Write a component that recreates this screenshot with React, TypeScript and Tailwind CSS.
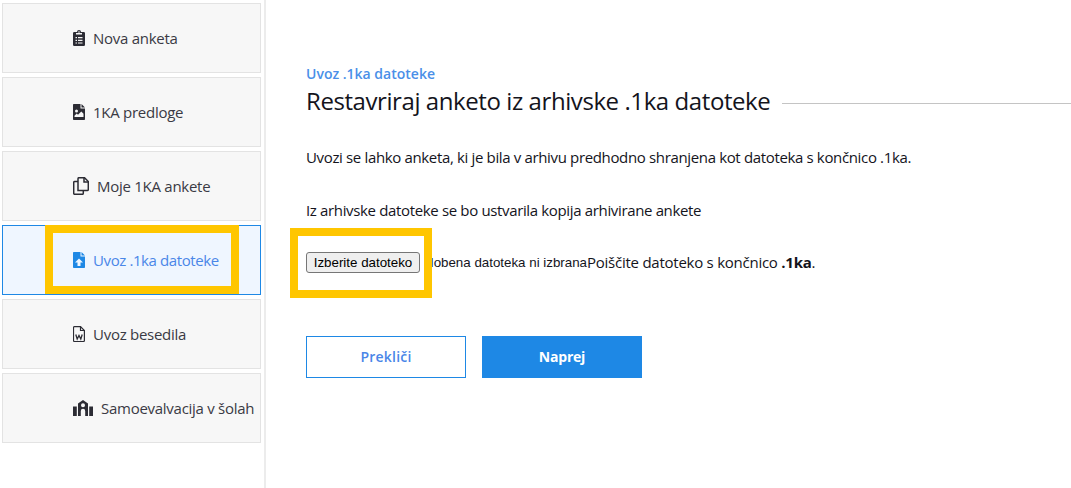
import { ReactNode } from "react";

const font = { fontFamily: '"Open Sans", sans-serif' };
const native = { fontFamily: '"Liberation Sans", sans-serif' };

function ClipboardIcon() {
  return (
    <svg viewBox="0 0 12 16" className="h-4 w-3" fill="#2c2c34">
      <path fillRule="evenodd" d="M1.200 2H4a2 2 0 0 1 4 0h2.800A1.200 1.200 0 0 1 12 3.200v11.600a1.200 1.200 0 0 1-1.200 1.200H1.200A1.200 1.200 0 0 1 0 14.800V3.200A1.200 1.200 0 0 1 1.200 2ZM5.200 2a.8.8 0 1 0 1.600 0 .8.8 0 0 0-1.600 0ZM3 3v1.500h6V3H3Zm-.5 4v1.200H4V7H2.500Zm2.500 0v1.200h4.500V7H5Zm-2.500 2.700v1.200H4V9.700H2.500Zm2.500 0v1.200h4.500V9.700H5Zm-2.500 2.700v1.200H4v-1.200H2.500Zm2.500 0v1.200h4.500v-1.200H5Z" />
    </svg>
  );
}

function ImageFileIcon() {
  return (
    <svg viewBox="0 0 12 16" className="h-4 w-3" fill="#2c2c34">
      <path fillRule="evenodd" d="M.8 0h6.700v4.500H12v10.700a.8.8 0 0 1-.8.8H.8a.8.8 0 0 1-.8-.8V.8A.8.8 0 0 1 .8 0Zm7.700 0L12 3.500H8.500V0ZM3.500 5.500a1.500 1.500 0 1 0 0 3 1.500 1.500 0 0 0 0-3ZM1.500 13h9V9.800L8.300 7.500 5 10.800 3.700 9.500 1.500 11.700V13Z" />
    </svg>
  );
}

function CopyIcon() {
  return (
    <svg viewBox="0 0 16 18" className="h-[18px] w-4" fill="none" stroke="#2c2c34" strokeWidth="1.500">
      <path d="M5 13.500V1.700c0-.5.4-1 1-1h5.500l3.800 3.800V12.500c0 .5-.4 1-1 1H5Z" />
      <path d="M11 1v4h4" />
      <path d="M5 4.500H1.700c-.6 0-1 .4-1 1v10.800c0 .6.4 1 1 1h7.600c.6 0 1-.4 1-1v-2.800" />
    </svg>
  );
}

function UploadFileIcon() {
  return (
    <svg viewBox="0 0 12 16" className="h-4 w-3" fill="#1e88e5">
      <path fillRule="evenodd" d="M.8 0h6.700v4.500H12v10.700a.8.8 0 0 1-.8.8H.8a.8.8 0 0 1-.8-.8V.8A.8.8 0 0 1 .8 0Zm7.700 0L12 3.500H8.500V0ZM6 6.500 2 10.500h2.500V14h3v-3.500H10L6 6.500Z" />
    </svg>
  );
}

function WordFileIcon() {
  return (
    <svg viewBox="0 0 12 16" className="h-4 w-3" fill="none" stroke="#2c2c34" strokeWidth="1.200">
      <path d="M1.500.6h6l3.900 3.900v10a1 1 0 0 1-1 1h-8.900a1 1 0 0 1-1-1v-13a1 1 0 0 1 1-.9Z" />
      <path d="M7.500.6v3.900h3.900" />
      <path d="M2.800 8.500l1.400 4.500L6 9.500 7.800 13l1.400-4.500" strokeWidth="1.300" />
    </svg>
  );
}

function SchoolIcon() {
  return (
    <svg viewBox="0 0 20 16" className="h-4 w-5" fill="#2c2c34">
      <path fillRule="evenodd" d="M10 0l5 3.500V16h-2.800v-5a2.200 2.200 0 0 0-4.400 0v5H5V3.500L10 0Zm0 3.200a2 2 0 1 0 0 4 2 2 0 0 0 0-4Z" />
      <rect x="0" y="6.500" width="3.800" height="9.500" />
      <rect x="16.200" y="6.500" width="3.800" height="9.500" />
    </svg>
  );
}

function NavCard({ icon, label, active }: { icon: ReactNode; label: string; active?: boolean }) {
  return (
    <div className={`flex h-[70px] w-[259px] items-center border pl-[70px] ${active ? "border-[#1e88e5] bg-[#eff6ff] text-[#4a86e8]" : "border-[#e3e3e3] bg-[#f7f7f7] text-[#3a3a44]"}`}>
      <div className="flex items-center gap-2">
        {icon}
        <span className={`text-[15px] whitespace-nowrap ${active ? "tracking-[-0.4px]" : "tracking-[-0.27px]"}`}>{label}</span>
      </div>
    </div>
  );
}

export default function App() {
  return (
    <div className="relative flex h-[488px] w-[1071px] overflow-hidden bg-white text-[#14141c]" style={font}>
      <aside className="flex h-full w-[266px] shrink-0 flex-col gap-1 border-r-2 border-[#ececec] pt-[3px] pl-[2px]">
        <NavCard icon={<ClipboardIcon />} label="Nova anketa" />
        <NavCard icon={<ImageFileIcon />} label="1KA predloge" />
        <NavCard icon={<CopyIcon />} label="Moje 1KA ankete" />
        <NavCard icon={<UploadFileIcon />} label="Uvoz .1ka datoteke" active />
        <NavCard icon={<WordFileIcon />} label="Uvoz besedila" />
        <NavCard icon={<SchoolIcon />} label="Samoevalvacija v šolah" />
      </aside>
      <main className="min-w-0 flex-1 pt-[65px] pl-10">
        <div className="text-sm leading-[18px] font-semibold text-[#4a8fe8]">Uvoz .1ka datoteke</div>
        <div className="mt-[2px] flex items-center">
          <h1 className="text-2xl leading-[32px] tracking-[-0.42px] whitespace-nowrap">Restavriraj anketo iz arhivske .1ka datoteke</h1>
          <div className="mt-[4px] ml-3 h-px flex-1 bg-[#c4c4c4]" />
        </div>
        <p className="mt-[30px] text-[15px] leading-5 tracking-[-0.35px]">Uvozi se lahko anketa, ki je bila v arhivu predhodno shranjena kot datoteka s končnico .1ka.</p>
        <p className="mt-[33px] text-[15px] leading-5 tracking-[-0.35px]">Iz arhivske datoteke se bo ustvarila kopija arhivirane ankete</p>
        <div className="mt-[32px] flex h-[21px] items-center">
          <button className="h-[21px] w-[114px] rounded-[3px] border border-[#767676] bg-[#efefef] text-[13.33px] leading-none text-black" style={native}>Izberite datoteko</button>
          <span className="ml-[4px] text-[13.33px] whitespace-nowrap" style={native}>Nobena datoteka ni izbrana</span>
          <span className="text-[15px] tracking-[-0.25px] whitespace-nowrap">Poiščite datoteko s končnico <b>.1ka</b>.</span>
        </div>
        <div className="mt-[63px] flex gap-4">
          <button className="h-[42px] w-[160px] border border-[#1e88e5] bg-white text-sm font-semibold tracking-[0.2px] text-[#4a86e8]">Prekliči</button>
          <button className="h-[42px] w-[160px] bg-[#1e88e5] text-sm font-bold tracking-[-0.2px] text-white">Naprej</button>
        </div>
      </main>
      <div className="absolute top-[225px] left-[45px] h-[69px] w-[194px] border-8 border-[#ffc600]" />
      <div className="absolute top-[228px] left-[290px] h-[70px] w-[142px] border-8 border-[#ffc600]" />
    </div>
  );
}
